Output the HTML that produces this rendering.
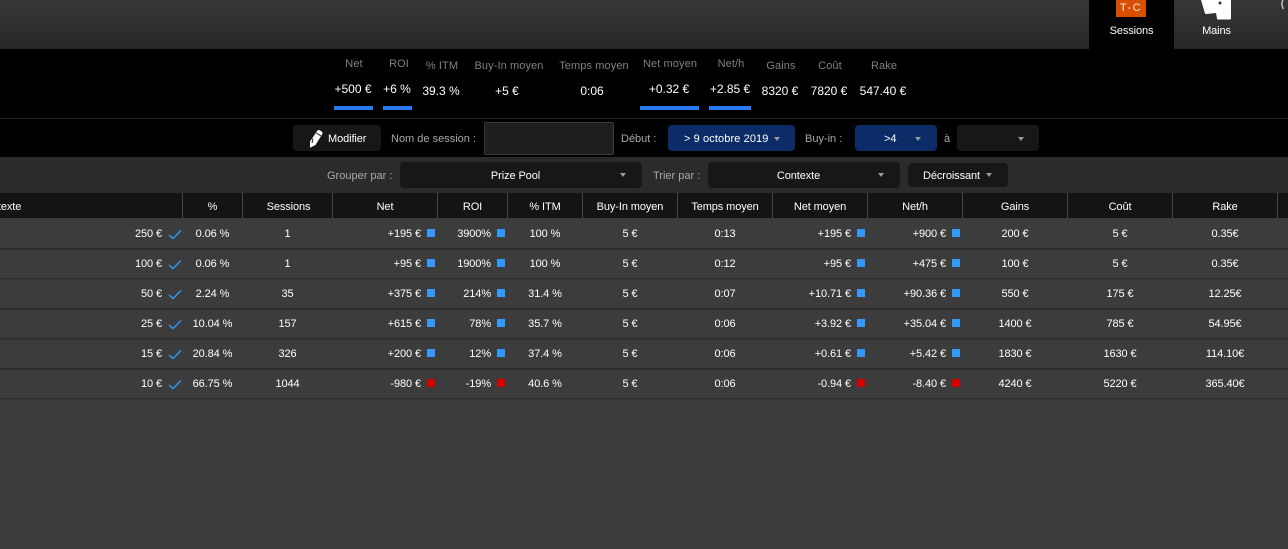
<!DOCTYPE html>
<html><head><meta charset="utf-8">
<style>
html,body{margin:0;padding:0;width:1288px;height:549px;overflow:hidden;background:#3c3c3c}
body{position:relative;font-family:"Liberation Sans",sans-serif;font-size:11px;letter-spacing:-.1px;color:#fff}
div{position:absolute;box-sizing:border-box}
.t{white-space:nowrap;line-height:14px;height:14px;margin-top:1px}
.c{text-align:center}
.r{text-align:right}
.lab{color:#808080;font-size:11px;letter-spacing:.1px}
.val{font-size:12px;letter-spacing:0;color:#fff;margin-top:-1px}
.bar{background:#2979f0;height:4px;top:106px}
.fl{color:#a8a8a8;letter-spacing:0}
.btn{background:#171717;border-radius:4px}
.blue{background:#0c2c68;border-radius:4px}
.arr{width:0;height:0;border-left:3.5px solid transparent;border-right:3.5px solid transparent;border-top:4px solid #999}
.sep{width:1px;top:193px;height:25px;background:#484848}
.hd{top:199px}
.ln{left:0;width:1288px;height:1px;background:#2a2a2a;box-shadow:0 1px 0 #343434}
.sq{width:8px;height:8px;background:#3399ff}
.rd{background:#d40000}
</style></head>
<body>
<!-- top bar -->
<div style="left:0;top:0;width:1288px;height:49px;background:linear-gradient(#363636,#282828)"></div>
<div style="left:1089px;top:0;width:85px;height:49px;background:#000"></div>
<div style="left:1116px;top:0;width:30px;height:17px;background:#d94f00"></div>
<div class="t c" style="left:1116px;top:0;width:30px;color:#f7e6d8;letter-spacing:1.5px;font-size:11px">T-C</div>
<div class="t c" style="left:1089px;top:23px;width:85px">Sessions</div>
<svg style="position:absolute;left:1190px;top:0" width="60" height="24"><path d="M11 0L15 13.500Q15.500 14 16.500 14L26 13L27 18.500Q27 19.500 28.500 19.500L40 19.500Q41 19.500 41 18L41 0Z" fill="#fff"/><circle cx="30" cy="3" r="1.500" fill="#333"/></svg>
<svg style="position:absolute;left:1274px;top:0" width="14" height="12"><path d="M9 0Q6.500 4 9.500 9" fill="none" stroke="#bbb" stroke-width="1.500"/></svg>
<div class="t c" style="left:1174px;top:23px;width:85px">Mains</div>
<!-- stats -->
<div style="left:0;top:49px;width:1288px;height:108px;background:#000"></div>
<div class="t c lab" style="left:324px;top:56px;width:60px">Net</div>
<div class="t c lab" style="left:369px;top:56px;width:60px">ROI</div>
<div class="t c lab" style="left:412px;top:58px;width:60px">% ITM</div>
<div class="t c lab" style="left:469px;top:58px;width:80px">Buy-In moyen</div>
<div class="t c lab" style="left:554px;top:58px;width:80px">Temps moyen</div>
<div class="t c lab" style="left:630px;top:56px;width:80px">Net moyen</div>
<div class="t c lab" style="left:701px;top:56px;width:60px">Net/h</div>
<div class="t c lab" style="left:751px;top:58px;width:60px">Gains</div>
<div class="t c lab" style="left:800px;top:58px;width:60px">Coût</div>
<div class="t c lab" style="left:854px;top:58px;width:60px">Rake</div>
<div class="t c val" style="left:323px;top:83px;width:60px">+500 €</div>
<div class="t c val" style="left:367px;top:83px;width:60px">+6 %</div>
<div class="t c val" style="left:411px;top:85px;width:60px">39.3 %</div>
<div class="t c val" style="left:477px;top:85px;width:60px">+5 €</div>
<div class="t c val" style="left:562px;top:85px;width:60px">0:06</div>
<div class="t c val" style="left:639px;top:83px;width:60px">+0.32 €</div>
<div class="t c val" style="left:700px;top:83px;width:60px">+2.85 €</div>
<div class="t c val" style="left:750px;top:85px;width:60px">8320 €</div>
<div class="t c val" style="left:799px;top:85px;width:60px">7820 €</div>
<div class="t c val" style="left:853px;top:85px;width:60px">547.40 €</div>
<div class="bar" style="left:334px;width:39px"></div>
<div class="bar" style="left:383px;width:29px"></div>
<div class="bar" style="left:640px;width:59px"></div>
<div class="bar" style="left:709px;width:42px"></div>
<div style="left:0;top:118px;width:1288px;height:1px;background:#262626"></div>
<!-- filter row 1 -->
<div class="btn" style="left:293px;top:125px;width:88px;height:26px"></div>
<svg style="position:absolute;left:306px;top:128px" width="18" height="21"><path d="M11.500 2.500Q12.500 1.500 14 2.500L16 3.800Q17 4.800 16.300 6L9.500 17L4 19.800L4 13.500Z" fill="#fff"/><path d="M10.300 5L14.800 7.800M7 10.500L6 15" stroke="#171717" stroke-width="1" fill="none"/></svg>
<div class="t" style="left:328px;top:131px">Modifier</div>
<div class="t fl" style="left:391px;top:131px">Nom de session :</div>
<div style="left:484px;top:122px;width:130px;height:33px;background:#1e1e1e;border:1px solid #3a3a3a;border-radius:2px"></div>
<div class="t fl" style="left:621px;top:131px">Début :</div>
<div class="blue" style="left:668px;top:125px;width:127px;height:26px"></div>
<div class="t" style="left:684px;top:131px;letter-spacing:.1px">&gt; 9 octobre 2019</div>
<div class="arr" style="left:774px;top:137px"></div>
<div class="t fl" style="left:805px;top:131px">Buy-in :</div>
<div class="blue" style="left:855px;top:125px;width:82px;height:26px"></div>
<div class="t" style="left:884px;top:131px">&gt;4</div>
<div class="arr" style="left:915px;top:137px"></div>
<div class="t fl" style="left:944px;top:131px">à</div>
<div class="btn" style="left:957px;top:125px;width:82px;height:26px"></div>
<div class="arr" style="left:1018px;top:137px"></div>
<!-- filter row 2 -->
<div style="left:0;top:157px;width:1288px;height:36px;background:#2b2b2b"></div>
<div class="t fl" style="left:327px;top:168px">Grouper par :</div>
<div class="btn" style="left:400px;top:162px;width:242px;height:26px"></div>
<div class="t c" style="left:400px;top:168px;width:231px">Prize Pool</div>
<div class="arr" style="left:620px;top:173px"></div>
<div class="t fl" style="left:653px;top:168px">Trier par :</div>
<div class="btn" style="left:708px;top:162px;width:192px;height:26px"></div>
<div class="t c" style="left:708px;top:168px;width:181px">Contexte</div>
<div class="arr" style="left:878px;top:173px"></div>
<div class="btn" style="left:908px;top:163px;width:100px;height:24px"></div>
<div class="t" style="left:923px;top:168px">Décroissant</div>
<div class="arr" style="left:986px;top:173px"></div>
<!-- header -->
<div style="left:0;top:193px;width:1288px;height:25px;background:#141414"></div>
<div class="sep" style="left:182px"></div><div class="sep" style="left:242px"></div><div class="sep" style="left:332px"></div><div class="sep" style="left:437px"></div><div class="sep" style="left:507px"></div><div class="sep" style="left:582px"></div><div class="sep" style="left:677px"></div><div class="sep" style="left:772px"></div><div class="sep" style="left:867px"></div><div class="sep" style="left:962px"></div><div class="sep" style="left:1067px"></div><div class="sep" style="left:1172px"></div><div class="sep" style="left:1277px"></div>
<div class="t hd" style="left:-22px">Contexte</div>
<div class="t hd c" style="left:183px;width:59px">%</div>
<div class="t hd c" style="left:244px;width:89px">Sessions</div>
<div class="t hd c" style="left:333px;width:104px">Net</div>
<div class="t hd c" style="left:438px;width:69px">ROI</div>
<div class="t hd c" style="left:508px;width:74px">% ITM</div>
<div class="t hd c" style="left:583px;width:94px">Buy-In moyen</div>
<div class="t hd c" style="left:678px;width:94px">Temps moyen</div>
<div class="t hd c" style="left:773px;width:94px">Net moyen</div>
<div class="t hd c" style="left:868px;width:94px">Net/h</div>
<div class="t hd c" style="left:963px;width:104px">Gains</div>
<div class="t hd c" style="left:1068px;width:104px">Coût</div>
<div class="t hd c" style="left:1173px;width:104px">Rake</div>
<!-- row lines -->
<div class="ln" style="top:248px"></div><div class="ln" style="top:278px"></div><div class="ln" style="top:308px"></div><div class="ln" style="top:338px"></div><div class="ln" style="top:368px"></div><div class="ln" style="top:398px"></div>

<!-- row 1 -->
<div class="t r" style="left:100px;top:226px;width:62px">250 €</div>
<svg style="position:absolute;left:168px;top:229px" width="14" height="11"><path d="M1 6l4 3.500L13 1.500" fill="none" stroke="#2e96ee" stroke-width="1.500"/></svg>
<div class="t c" style="left:183px;top:226px;width:59px">0.06 %</div>
<div class="t c" style="left:243px;top:226px;width:89px">1</div>
<div class="t r" style="left:341px;top:226px;width:80px">+195 €</div><div class="sq" style="left:427px;top:229px"></div>
<div class="t r" style="left:431px;top:226px;width:60px">3900%</div><div class="sq" style="left:497px;top:229px"></div>
<div class="t c" style="left:508px;top:226px;width:74px">100 %</div>
<div class="t c" style="left:583px;top:226px;width:94px">5 €</div>
<div class="t c" style="left:678px;top:226px;width:94px">0:13</div>
<div class="t r" style="left:771px;top:226px;width:80px">+195 €</div><div class="sq" style="left:857px;top:229px"></div>
<div class="t r" style="left:866px;top:226px;width:80px">+900 €</div><div class="sq" style="left:952px;top:229px"></div>
<div class="t c" style="left:963px;top:226px;width:104px">200 €</div>
<div class="t c" style="left:1068px;top:226px;width:104px">5 €</div>
<div class="t c" style="left:1173px;top:226px;width:104px">0.35€</div>
<!-- row 2 -->
<div class="t r" style="left:100px;top:256px;width:62px">100 €</div>
<svg style="position:absolute;left:168px;top:259px" width="14" height="11"><path d="M1 6l4 3.500L13 1.500" fill="none" stroke="#2e96ee" stroke-width="1.500"/></svg>
<div class="t c" style="left:183px;top:256px;width:59px">0.06 %</div>
<div class="t c" style="left:243px;top:256px;width:89px">1</div>
<div class="t r" style="left:341px;top:256px;width:80px">+95 €</div><div class="sq" style="left:427px;top:259px"></div>
<div class="t r" style="left:431px;top:256px;width:60px">1900%</div><div class="sq" style="left:497px;top:259px"></div>
<div class="t c" style="left:508px;top:256px;width:74px">100 %</div>
<div class="t c" style="left:583px;top:256px;width:94px">5 €</div>
<div class="t c" style="left:678px;top:256px;width:94px">0:12</div>
<div class="t r" style="left:771px;top:256px;width:80px">+95 €</div><div class="sq" style="left:857px;top:259px"></div>
<div class="t r" style="left:866px;top:256px;width:80px">+475 €</div><div class="sq" style="left:952px;top:259px"></div>
<div class="t c" style="left:963px;top:256px;width:104px">100 €</div>
<div class="t c" style="left:1068px;top:256px;width:104px">5 €</div>
<div class="t c" style="left:1173px;top:256px;width:104px">0.35€</div>
<!-- row 3 -->
<div class="t r" style="left:100px;top:286px;width:62px">50 €</div>
<svg style="position:absolute;left:168px;top:289px" width="14" height="11"><path d="M1 6l4 3.500L13 1.500" fill="none" stroke="#2e96ee" stroke-width="1.500"/></svg>
<div class="t c" style="left:183px;top:286px;width:59px">2.24 %</div>
<div class="t c" style="left:243px;top:286px;width:89px">35</div>
<div class="t r" style="left:341px;top:286px;width:80px">+375 €</div><div class="sq" style="left:427px;top:289px"></div>
<div class="t r" style="left:431px;top:286px;width:60px">214%</div><div class="sq" style="left:497px;top:289px"></div>
<div class="t c" style="left:508px;top:286px;width:74px">31.4 %</div>
<div class="t c" style="left:583px;top:286px;width:94px">5 €</div>
<div class="t c" style="left:678px;top:286px;width:94px">0:07</div>
<div class="t r" style="left:771px;top:286px;width:80px">+10.71 €</div><div class="sq" style="left:857px;top:289px"></div>
<div class="t r" style="left:866px;top:286px;width:80px">+90.36 €</div><div class="sq" style="left:952px;top:289px"></div>
<div class="t c" style="left:963px;top:286px;width:104px">550 €</div>
<div class="t c" style="left:1068px;top:286px;width:104px">175 €</div>
<div class="t c" style="left:1173px;top:286px;width:104px">12.25€</div>
<!-- row 4 -->
<div class="t r" style="left:100px;top:316px;width:62px">25 €</div>
<svg style="position:absolute;left:168px;top:319px" width="14" height="11"><path d="M1 6l4 3.500L13 1.500" fill="none" stroke="#2e96ee" stroke-width="1.500"/></svg>
<div class="t c" style="left:183px;top:316px;width:59px">10.04 %</div>
<div class="t c" style="left:243px;top:316px;width:89px">157</div>
<div class="t r" style="left:341px;top:316px;width:80px">+615 €</div><div class="sq" style="left:427px;top:319px"></div>
<div class="t r" style="left:431px;top:316px;width:60px">78%</div><div class="sq" style="left:497px;top:319px"></div>
<div class="t c" style="left:508px;top:316px;width:74px">35.7 %</div>
<div class="t c" style="left:583px;top:316px;width:94px">5 €</div>
<div class="t c" style="left:678px;top:316px;width:94px">0:06</div>
<div class="t r" style="left:771px;top:316px;width:80px">+3.92 €</div><div class="sq" style="left:857px;top:319px"></div>
<div class="t r" style="left:866px;top:316px;width:80px">+35.04 €</div><div class="sq" style="left:952px;top:319px"></div>
<div class="t c" style="left:963px;top:316px;width:104px">1400 €</div>
<div class="t c" style="left:1068px;top:316px;width:104px">785 €</div>
<div class="t c" style="left:1173px;top:316px;width:104px">54.95€</div>
<!-- row 5 -->
<div class="t r" style="left:100px;top:346px;width:62px">15 €</div>
<svg style="position:absolute;left:168px;top:349px" width="14" height="11"><path d="M1 6l4 3.500L13 1.500" fill="none" stroke="#2e96ee" stroke-width="1.500"/></svg>
<div class="t c" style="left:183px;top:346px;width:59px">20.84 %</div>
<div class="t c" style="left:243px;top:346px;width:89px">326</div>
<div class="t r" style="left:341px;top:346px;width:80px">+200 €</div><div class="sq" style="left:427px;top:349px"></div>
<div class="t r" style="left:431px;top:346px;width:60px">12%</div><div class="sq" style="left:497px;top:349px"></div>
<div class="t c" style="left:508px;top:346px;width:74px">37.4 %</div>
<div class="t c" style="left:583px;top:346px;width:94px">5 €</div>
<div class="t c" style="left:678px;top:346px;width:94px">0:06</div>
<div class="t r" style="left:771px;top:346px;width:80px">+0.61 €</div><div class="sq" style="left:857px;top:349px"></div>
<div class="t r" style="left:866px;top:346px;width:80px">+5.42 €</div><div class="sq" style="left:952px;top:349px"></div>
<div class="t c" style="left:963px;top:346px;width:104px">1830 €</div>
<div class="t c" style="left:1068px;top:346px;width:104px">1630 €</div>
<div class="t c" style="left:1173px;top:346px;width:104px">114.10€</div>
<!-- row 6 -->
<div class="t r" style="left:100px;top:376px;width:62px">10 €</div>
<svg style="position:absolute;left:168px;top:379px" width="14" height="11"><path d="M1 6l4 3.500L13 1.500" fill="none" stroke="#2e96ee" stroke-width="1.500"/></svg>
<div class="t c" style="left:183px;top:376px;width:59px">66.75 %</div>
<div class="t c" style="left:243px;top:376px;width:89px">1044</div>
<div class="t r" style="left:341px;top:376px;width:80px">-980 €</div><div class="sq rd" style="left:427px;top:379px"></div>
<div class="t r" style="left:431px;top:376px;width:60px">-19%</div><div class="sq rd" style="left:497px;top:379px"></div>
<div class="t c" style="left:508px;top:376px;width:74px">40.6 %</div>
<div class="t c" style="left:583px;top:376px;width:94px">5 €</div>
<div class="t c" style="left:678px;top:376px;width:94px">0:06</div>
<div class="t r" style="left:771px;top:376px;width:80px">-0.94 €</div><div class="sq rd" style="left:857px;top:379px"></div>
<div class="t r" style="left:866px;top:376px;width:80px">-8.40 €</div><div class="sq rd" style="left:952px;top:379px"></div>
<div class="t c" style="left:963px;top:376px;width:104px">4240 €</div>
<div class="t c" style="left:1068px;top:376px;width:104px">5220 €</div>
<div class="t c" style="left:1173px;top:376px;width:104px">365.40€</div>
</body></html>
